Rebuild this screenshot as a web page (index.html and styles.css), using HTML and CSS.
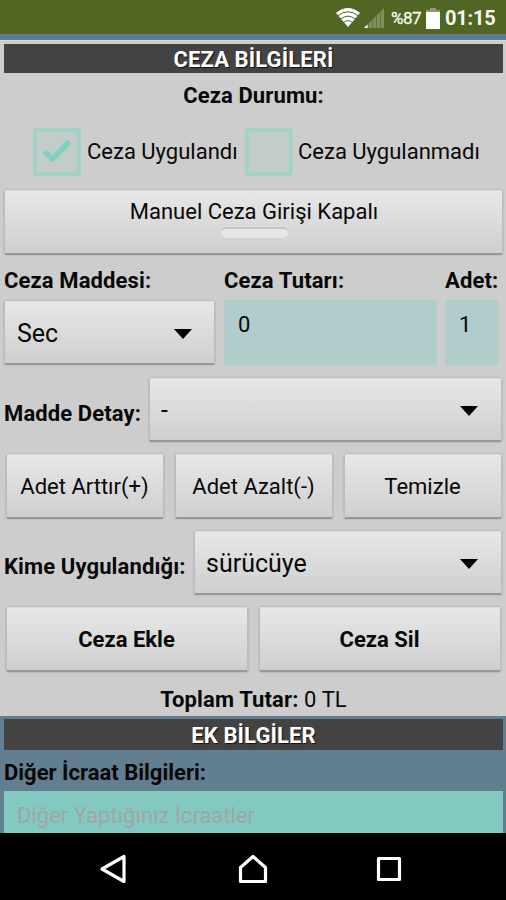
FILE: index.html
```html
<!DOCTYPE html>
<html lang="tr">
<head>
<meta charset="utf-8">
<title>Ceza Bilgileri</title>
<link rel="stylesheet" href="styles.css">
</head>
<body>
<header class="status">
  <svg class="wifi" width="26" height="21" viewBox="0 0 26 21">
    <path d="M1 6Q13-4 25 6L13 20Z" fill="#fff"/>
    <path d="M2.5 9Q13 .5 23.5 9M5.5 12.2Q13 6 20.5 12.2M8.5 15.4Q13 11.8 17.500 15.4" fill="none" stroke="#526623" stroke-width="1"/>
  </svg>
  <svg class="signal" width="20" height="20" viewBox="0 0 20 20">
    <path d="M0 20L20 0V20z" fill="#7f9060"/>
    <path d="M0 20l3.500-3.500V20z" fill="#fff"/>
    <path d="M4.500 14v6M8.500 10v10M12.500 6v14M16.500 2v18" stroke="#60733a" stroke-width="1"/>
  </svg>
  <span class="percent">%87</span>
  <svg class="battery" width="14" height="21" viewBox="0 0 14 21">
    <path d="M4 0h6v2h4v3H0V2h4z" fill="#929c70"/><path d="M0 4h14v17H0z" fill="#fff"/>
  </svg>
  <time class="clock">01:15</time>
</header>
<main class="content">
  <section class="panel">
    <h1 class="heading">CEZA BİLGİLERİ</h1>
    <p class="state-title"><b>Ceza Durumu:</b></p>
    <div class="checks">
      <span class="box"><svg width="30" height="26" viewBox="0 0 30 26"><path d="M2.500 12.500L10.500 20L27.500 2.500" fill="none" stroke="#80cfc3" stroke-width="5.500"/></svg></span>
      <span class="check-label applied">Ceza Uygulandı</span>
      <span class="box"></span>
      <span class="check-label">Ceza Uygulanmadı</span>
    </div>
    <button class="btn toggle"><span class="toggle-text">Manuel Ceza Girişi Kapalı</span><i class="bar"></i></button>
    <div class="fields">
      <div class="field"><b class="label">Ceza Maddesi:</b><div class="btn select article"><span>Sec</span><svg class="arrow" width="18" height="10" viewBox="0 0 18 10"><path d="M0 0h18L9 10z"/></svg></div></div>
      <div class="field"><b class="label">Ceza Tutarı:</b><div class="input">0</div></div>
      <div class="field"><b class="label adet">Adet:</b><div class="input">1</div></div>
    </div>
    <div class="row detail">
      <b class="label">Madde Detay:</b>
      <div class="btn select"><span class="dash">-</span><svg class="arrow" width="18" height="10" viewBox="0 0 18 10"><path d="M0 0h18L9 10z"/></svg></div>
    </div>
    <div class="buttons three"><button class="btn inc">Adet Arttır(+)</button><button class="btn dec">Adet Azalt(-)</button><button class="btn clear">Temizle</button></div>
    <div class="row target">
      <b class="label">Kime Uygulandığı:</b>
      <div class="btn select"><span class="driver">sürücüye</span><svg class="arrow" width="18" height="10" viewBox="0 0 18 10"><path d="M0 0h18L9 10z"/></svg></div>
    </div>
    <div class="buttons two"><button class="btn add">Ceza Ekle</button><button class="btn remove">Ceza Sil</button></div>
    <p class="total"><span><b>Toplam Tutar:</b> 0 TL</span></p>
  </section>
  <section class="extra">
    <h2 class="heading second">EK BİLGİLER</h2>
    <b class="extra-label">Diğer İcraat Bilgileri:</b>
    <div class="notes">Diğer Yaptığınız İcraatler</div>
  </section>
</main>
<nav class="nav">
  <svg width="28" height="30" viewBox="0 0 28 30"><path d="M3 15L25 2.500V27.500Z"/></svg>
  <svg width="30" height="30" viewBox="0 0 30 30"><path d="M2.500 27.500V13.500L15 2.500L27.500 13.500V27.500Z"/></svg>
  <svg width="26" height="26" viewBox="0 0 26 26"><path d="M2.500 2.500h21v21h-21z"/></svg>
</nav>
</body>
</html>
```
FILE: styles.css
```css
* { box-sizing: border-box; }
body { margin: 0; width: 506px; height: 900px; overflow: hidden; background: #000; color: #080808; font: 22px/26px Roboto, sans-serif; white-space: nowrap; }
svg { display: block; flex: none; }
h1, h2, p { margin: 0; }
b { letter-spacing: .12px; }
.status { height: 34px; background: #526623; color: #f7f8f2; display: flex; align-items: center; padding: 2px 11px 0 0; justify-content: flex-end; }
.wifi { margin: -1px 3px 0 0; }
.signal { margin-right: 7px; }
.percent { width: 31px; font-size: 17px; letter-spacing: -.5px; -webkit-text-stroke: .3px; }
.battery { margin: 0 5px 0 4px; }
.clock { width: 50px; font-size: 20px; font-weight: 700; letter-spacing: -.2px; }
.content { height: 799px; background: #5d7d94; padding-top: 6px; overflow: hidden; }
.panel { height: 676px; background: #cdcdcd; padding: 3px 3px 0 4px; border-top: 1px solid #dadad4; }
.heading { height: 29px; margin: 0; background: #434343; color: #fff; text-align: center; font-size: 22px; line-height: 31px; letter-spacing: .1px; text-shadow: 1px 1px 1px #111; }
.state-title { height: 55px; padding-top: 10px; text-align: center; }
.checks { height: 48px; display: flex; align-items: center; padding-left: 29px; }
.box { width: 48px; height: 48px; border: 4px solid #a2d1c6; border-radius: 3px; background: #c2cdc9; display: flex; align-items: center; justify-content: center; }
.check-label { margin-left: 5px; }
.check-label.applied { margin-left: 6px; width: 158px; }
.btn { font: inherit; color: #080808; margin: 0; padding: 2px 0 0; border: 1px solid #bcbcbc; border-top-color: #dedede; border-bottom: 2px solid #989898; border-radius: 2px; background: linear-gradient(#e7e7e7, #cfcfcf); box-shadow: 0 0 2px #9b9b9b; display: flex; align-items: center; justify-content: center; }
.toggle { width: 499px; height: 65px; margin-top: 14px; flex-direction: column; justify-content: flex-start; padding: 8px 0 0 1px; }
.bar { width: 67px; height: 11px; margin: 2px 0 0 1px; background: #e6e6e6; border-radius: 5px; border-top: 2px solid #c5c5c5; }
.fields { display: grid; grid-template-columns: 211px 213px 53px; column-gap: 9px; height: 110px; margin-top: 13px; }
.fields .field:last-child { margin: 0 1px 0 -1px; }
.label { display: block; }
.field .label { height: 32px; }
.select { height: 64px; justify-content: flex-start; padding-left: 12px; font-size: 25px; flex: 1; }
.arrow { margin: 0 22px 0 auto; }
.article { width: 211px; margin: 1px 0 0; }
.input { height: 65px; background: #b0cccb; padding: 11px 13px; border: 1px solid #aed0c8; }
.row { display: flex; height: 64px; }
.row .label { padding-top: 23px; width: 145px; }
.row .select { flex: none; width: 353px; padding-left: 11px; }
.row.target .label { width: 190px; }
.row.target .select { width: 308px; }
.row .arrow { margin-right: 23px; }
.buttons { display: grid; column-gap: 11px; padding: 0 2px; height: 65px; margin: 12px 0; }
.buttons .btn { height: 65px; padding: 1px 1px 0 0; }
.three { grid-template-columns: repeat(3, 158px); }
.two { grid-template-columns: 242px 242px; font-weight: 700; letter-spacing: .05px; }
.target .btn { height: 64px; }
.total { text-align: center; padding-top: 3px; letter-spacing: .1px; }
.extra { padding: 3px 3px 0 4px; background: #617f90; }
.heading.second { height: 31px; line-height: 33px; }
.extra-label { display: block; height: 41px; padding-top: 10px; letter-spacing: 0; }
.notes { height: 60px; padding: 12px 13px; background: #82c9c1; color: #a2a5a4; }
.nav { height: 67px; background: #000; display: flex; align-items: center; padding: 5px 0 0 99px; }
.nav svg { fill: none; stroke: #fff; stroke-width: 3.200; stroke-linejoin: round; }
.nav svg + svg { margin-left: 111px; }
.nav svg:last-child { margin-left: 108px; }
```
